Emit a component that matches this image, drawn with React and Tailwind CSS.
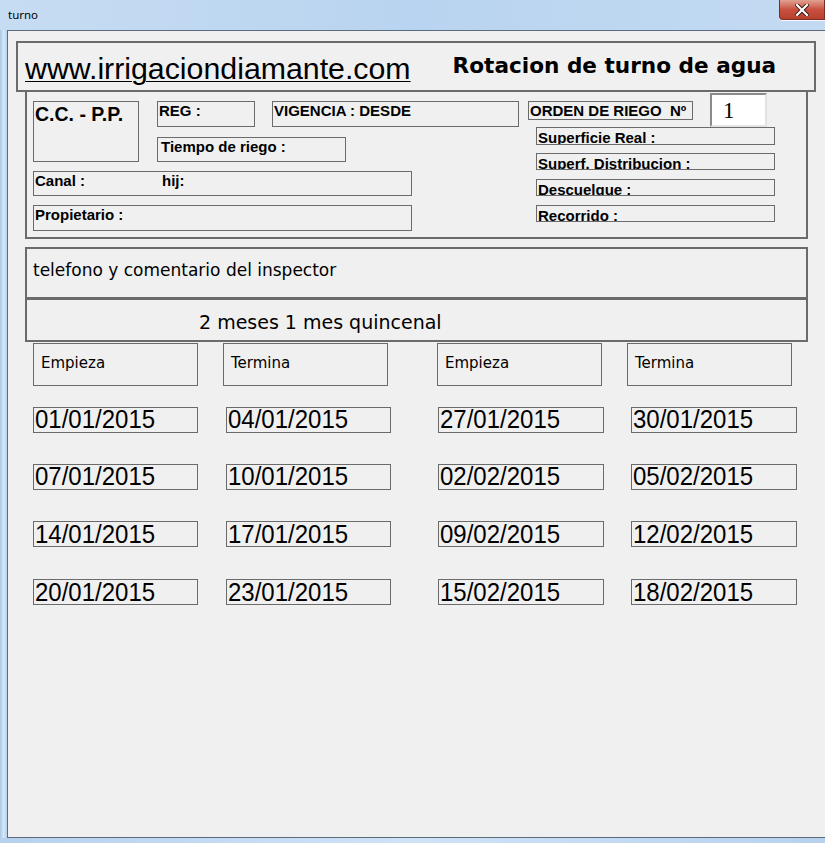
const ARIAL = "font-['Liberation_Sans',Arial,sans-serif]"
const LABEL = `${ARIAL} font-bold text-[15px] leading-none text-black`
const LINE = 'border border-[#6b6b6b]'

const DATES = [
  ['01/01/2015', '04/01/2015', '27/01/2015', '30/01/2015'],
  ['07/01/2015', '10/01/2015', '02/02/2015', '05/02/2015'],
  ['14/01/2015', '17/01/2015', '09/02/2015', '12/02/2015'],
  ['20/01/2015', '23/01/2015', '15/02/2015', '18/02/2015'],
]

// ─── Window chrome ───────────────────────────────────────────────────────────
function TitleBar() {
  return (
    <div className="flex h-[30px] items-start bg-gradient-to-r from-[#c6dcf2] via-[#b9d4f0] to-[#c3daf2]">
      <span className="mt-[8px] ml-[8px] font-['Noto_Sans',sans-serif] text-[11.5px] leading-[14px] text-black">
        turno
      </span>
      <div className="flex-1" />
      <div className="flex h-[20px] w-[46px] items-center justify-center rounded-bl-[4px] border border-t-0 border-[#7a2e24] bg-gradient-to-b from-[#e0a193] via-[#c9503f] to-[#b8402d] shadow-[0_1px_0_#f4f8fc]">
        <svg width="14" height="12" viewBox="0 0 14 12">
          <path d="M2 1 L12 11 M12 1 L2 11" stroke="#3b1410" strokeWidth="4" strokeLinecap="square" />
          <path d="M2 1 L12 11 M12 1 L2 11" stroke="#ffffff" strokeWidth="2.2" strokeLinecap="square" />
        </svg>
      </div>
    </div>
  )
}

// ─── Small label box ─────────────────────────────────────────────────────────
function Label({ className = '', children }) {
  return (
    <div className={`${LINE} ${LABEL} overflow-hidden whitespace-nowrap px-[1px] pt-[1px] ${className}`}>
      {children}
    </div>
  )
}

function HeaderPanel() {
  return (
    <>
      <div className="ml-[8px] mt-[10px] flex h-[51px] w-[800px] items-start border-2 border-[#6b6b6b]">
        <span className={`${ARIAL} ml-[7px] mt-[9px] text-[30.3px] leading-[34px] text-black underline decoration-1 underline-offset-[2px]`}>
          www.irrigaciondiamante.com
        </span>
        <span className="ml-[42px] mt-[10px] font-['DejaVu_Sans',Verdana,sans-serif] text-[21.6px] font-bold leading-[26px] text-black">
          Rotacion de turno de agua
        </span>
      </div>

      <div className="ml-[17px] flex h-[147px] w-[783px] border-2 border-t-0 border-[#6b6b6b]">
        {/* left column */}
        <div className="ml-[6px] mt-[9px] flex w-[486px] flex-col">
          <div className="flex">
            <div className={`${LINE} ${ARIAL} h-[61px] w-[106px] px-[1px] pt-[3px] text-[19.5px] font-bold leading-none text-black`}>
              C.C. - P.P.
            </div>
            <div className="ml-[18px] flex flex-col">
              <div className="flex">
                <Label className="h-[26px] w-[98px]">REG :</Label>
                <Label className="ml-[17px] h-[26px] w-[247px]">VIGENCIA : DESDE</Label>
              </div>
              <Label className="mt-[10px] h-[25px] w-[189px] pl-[3px]">Tiempo de riego :</Label>
            </div>
          </div>
          <Label className="mt-[9px] flex h-[25px] w-[379px]">
            <span className="w-[127px]">Canal :</span>
            <span>hij:</span>
          </Label>
          <Label className="mt-[9px] h-[26px] w-[379px]">Propietario :</Label>
        </div>

        {/* right column */}
        <div className="ml-[9px] flex flex-col">
          <div className="flex items-start">
            <Label className="mt-[9px] h-[19px] w-[165px]">ORDEN DE RIEGO&nbsp; Nº</Label>
            <div className="ml-[17px] mt-[1px] flex h-[34px] w-[57px] items-center border-2 border-t-[#8a8a8a] border-l-[#8a8a8a] border-r-[#e3e3e3] border-b-[#e3e3e3] bg-white pl-[11px] font-['Liberation_Serif',serif] text-[23px] leading-none text-black">
              1
            </div>
          </div>
          <Label className="ml-[8px] h-[18px] w-[239px] pt-[2px]">Superficie Real :</Label>
          <Label className="ml-[8px] mt-[8px] h-[17px] w-[239px] pt-[2px]">Superf. Distribucion :</Label>
          <Label className="ml-[8px] mt-[9px] h-[17px] w-[239px] pt-[2px]">Descuelgue :</Label>
          <Label className="ml-[8px] mt-[9px] h-[17px] w-[239px] pt-[2px]">Recorrido :</Label>
        </div>
      </div>
    </>
  )
}

function NotesPanel() {
  return (
    <div className="ml-[17px] mt-[8px] w-[783px] font-['DejaVu_Sans',Tahoma,sans-serif] text-black">
      <div className="flex h-[53px] items-center border-2 border-b-[3px] border-[#6b6b6b] pb-[4px] pl-[6px] text-[17px]">
        telefono y comentario del inspector
      </div>
      <div className="flex h-[42px] items-center border-2 border-t-0 border-[#6b6b6b] pt-[4px] pl-[172px] text-[19px]">
        2 meses 1 mes quincenal
      </div>
    </div>
  )
}

function DateTable() {
  const heads = [
    { text: 'Empieza', ml: 'ml-[25px]' },
    { text: 'Termina', ml: 'ml-[25px]' },
    { text: 'Empieza', ml: 'ml-[49px]' },
    { text: 'Termina', ml: 'ml-[25px]' },
  ]
  const cols = ['ml-[25px] w-[165px]', 'ml-[28px] w-[165px]', 'ml-[47px] w-[166px]', 'ml-[27px] w-[166px]']
  const rowGap = ['mt-[21px]', 'mt-[31px]', 'mt-[31px]', 'mt-[32px]']

  return (
    <div className="flex flex-col">
      <div className="mt-[1px] flex">
        {heads.map((h, i) => (
          <div
            key={i}
            className={`${h.ml} h-[43px] w-[165px] border border-[#6b6b6b] pl-[7px] pt-[10px] font-['DejaVu_Sans',Tahoma,sans-serif] text-[15px] leading-[18px] text-black`}
          >
            {h.text}
          </div>
        ))}
      </div>
      {DATES.map((row, r) => (
        <div key={r} className={`${rowGap[r]} flex`}>
          {row.map((d, c) => (
            <div key={c} className={`${cols[c]} h-[26px] overflow-hidden border border-[#6b6b6b] pl-[1px]`}>
              <span className={`${ARIAL} inline-block origin-bottom scale-y-[1.1] text-[24px] leading-[26px] text-black`}>
                {d}
              </span>
            </div>
          ))}
        </div>
      ))}
    </div>
  )
}

export default function App() {
  return (
    <div className="flex h-[843px] w-[825px] flex-col overflow-hidden bg-[#c4dbf1]">
      <TitleBar />
      <div className="flex h-[808px]">
        <div className="w-[7px] bg-gradient-to-r from-[#a9c6e4] via-[#d5e7f8] to-[#b8d2ee]" />
        <div className="flex-1 border-l border-t border-b border-[#5b6b7c] bg-[#f0f0f0]">
          <HeaderPanel />
          <NotesPanel />
          <DateTable />
        </div>
      </div>
      <div className="h-[5px] bg-gradient-to-r from-[#b7d1ee] via-[#cfe3f7] to-[#b7d1ee]" />
    </div>
  )
}
